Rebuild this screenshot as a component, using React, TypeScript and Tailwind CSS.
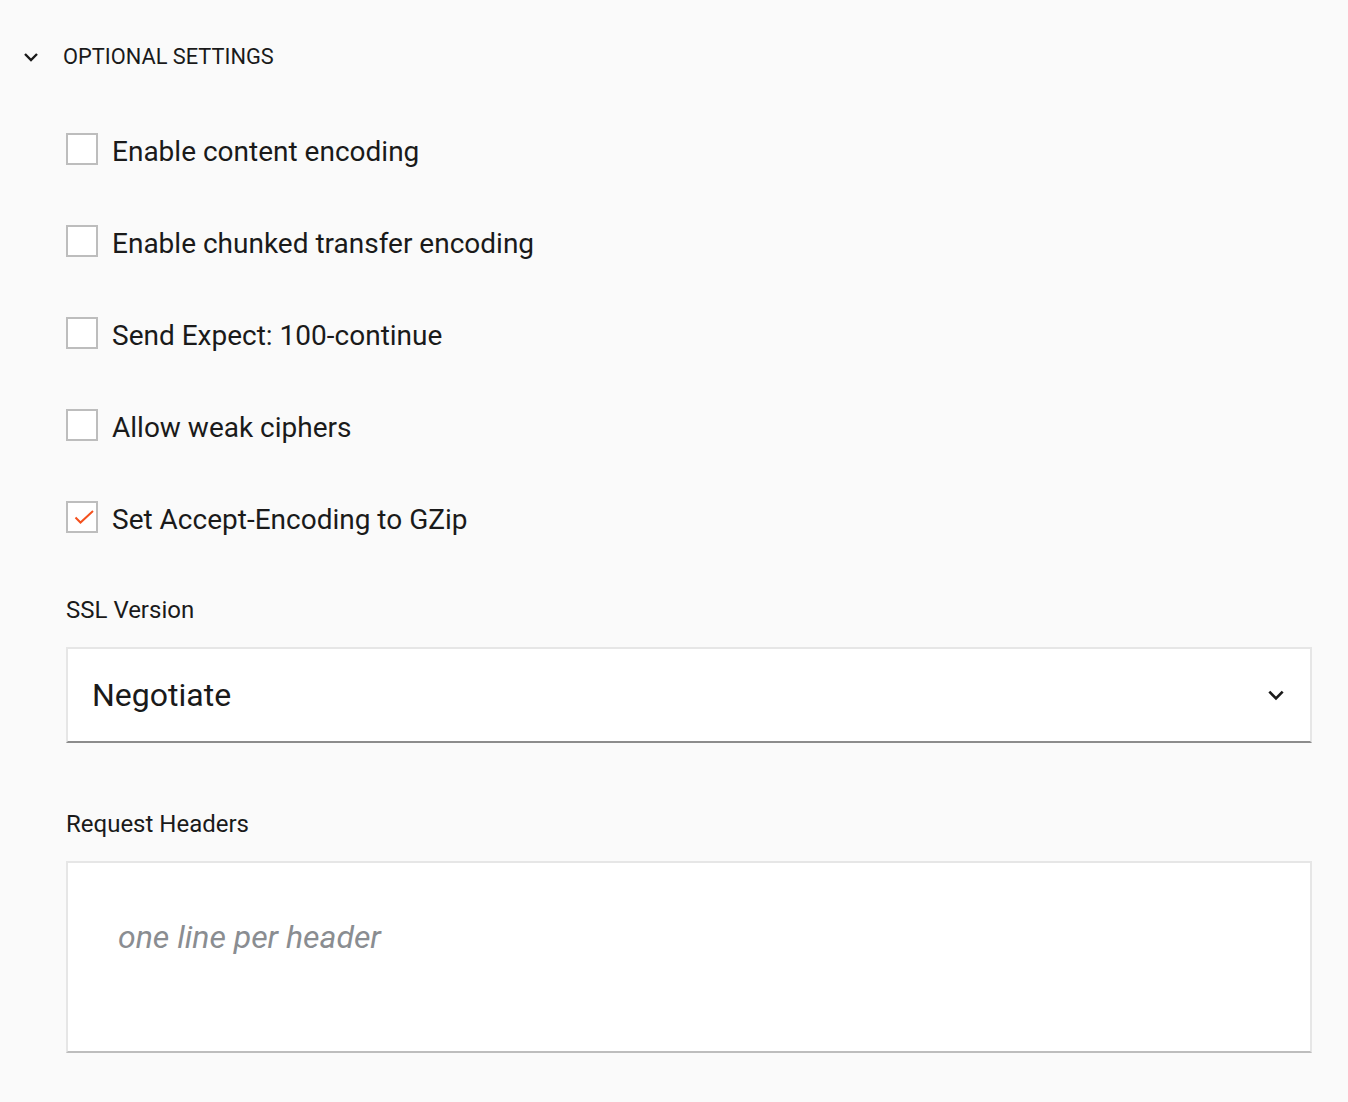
const options = [
  { label: "Enable content encoding", checked: false },
  { label: "Enable chunked transfer encoding", checked: false },
  { label: "Send Expect: 100-continue", checked: false },
  { label: "Allow weak ciphers", checked: false },
  { label: "Set Accept-Encoding to GZip", checked: true },
]

function Checkbox({ checked }: { checked: boolean }) {
  return (
    <span className="flex h-[32px] w-[32px] shrink-0 items-center justify-center border-2 border-[#bdbdbd] bg-white">
      {checked && (
        <svg width="28" height="28" viewBox="0 0 28 28" fill="none">
          <path d="M7.5 14.5 L12.5 19.5 L25 8" stroke="#f4511e" strokeWidth="2" />
        </svg>
      )}
    </span>
  )
}

export default function App() {
  return (
    <div className="min-h-[1102px] bg-[#fafafa] font-['Roboto',sans-serif] text-[#1a1a1a]">
      <div className="pt-[41px] pl-[22px] pr-[36px]">
        <button className="flex items-center gap-[23px] text-[21.8px] leading-[32px] uppercase">
          <svg width="18" height="18" viewBox="0 0 24 24" fill="none">
            <path d="M4 8 L12 16 L20 8" stroke="#1a1a1a" strokeWidth="3.2" />
          </svg>
          Optional Settings
        </button>

        <div className="pl-[44px]">
          <div className="mt-[60px] flex flex-col gap-[60px]">
            {options.map((o) => (
              <label key={o.label} className="flex h-[32px] items-center gap-[14px] text-[28px]">
                <Checkbox checked={o.checked} />
                <span className="mt-[6px] leading-[32px]">{o.label}</span>
              </label>
            ))}
          </div>

          <div className="mt-[61px] text-[24px] leading-[32px]">SSL Version</div>
          <div className="mt-[21px] flex h-[96px] items-center justify-between border-2 border-[#e6e6e6] border-b-[#8c8c8c] bg-white pl-[24px] pr-[24px]">
            <span className="text-[32px]">Negotiate</span>
            <svg width="20" height="20" viewBox="0 0 24 24" fill="none">
              <path d="M4 8 L12 16 L20 8" stroke="#1a1a1a" strokeWidth="3.2" />
            </svg>
          </div>

          <div className="mt-[65px] text-[24px] leading-[32px]">Request Headers</div>
          <div className="mt-[21px] h-[192px] border-2 border-[#e6e6e6] border-b-[#bdbdbd] bg-white pl-[50px] pt-[58px]">
            <div className="text-[32px] leading-[32px] italic text-[#8a8d91]">one line per header</div>
          </div>
        </div>
      </div>
    </div>
  )
}
